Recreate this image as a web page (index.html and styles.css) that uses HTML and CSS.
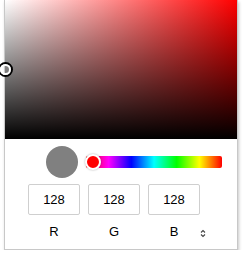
FILE: index.html
```html
<!DOCTYPE html>
<html>
<head>
<meta charset="utf-8">
<link rel="stylesheet" href="styles.css">
</head>
<body>
<div class="picker">
  <div class="sv">
    <div class="sv-marker"></div>
  </div>
  <div class="controls">
    <div class="swatch"></div>
    <div class="hue">
      <div class="hue-thumb"></div>
    </div>
  </div>
  <div class="values">
    <div class="field">128</div>
    <div class="field">128</div>
    <div class="field">128</div>
  </div>
  <div class="labels">
    <div class="label">R</div>
    <div class="label">G</div>
    <div class="label">B</div>
    <svg class="toggle" width="6" height="9" viewBox="0 0 6 9">
      <path d="M1 3.5 L3 1.5 L5 3.5 M1 5.5 L3 7.5 L5 5.5" fill="none" stroke="#444" stroke-width="1.1"/>
    </svg>
  </div>
</div>
</body>
</html>
```
FILE: styles.css
```css
html, body {
  margin: 0;
  padding: 0;
  background: #fff;
}
body {
  font-family: "Liberation Sans", Arial, sans-serif;
  font-size: 13px;
  color: #111;
}
.picker {
  margin-left: 4px;
  width: 232px;
  height: 249px;
  border: 1px solid #c8c8c8;
  border-top: 0;
  background: #fff;
  box-shadow: 1px 2px 3px rgba(0, 0, 0, 0.22);
}
.sv {
  position: relative;
  height: 139px;
  background:
    linear-gradient(to top, #000, rgba(0, 0, 0, 0)),
    linear-gradient(to right, #fff, #f00);
}
.sv-marker {
  position: absolute;
  left: 0;
  top: 69px;
  width: 7px;
  height: 7px;
  margin: -5.5px 0 0 -5.5px;
  border: 2px solid #fff;
  border-radius: 50%;
  box-shadow: 0 0 0 2px #000;
}
.controls {
  display: flex;
  align-items: center;
  margin-top: 7px;
  padding-left: 41px;
  gap: 8px;
}
.swatch {
  width: 32px;
  height: 32px;
  border-radius: 50%;
  background: #808080;
}
.hue {
  position: relative;
  width: 136px;
  height: 12px;
  border-radius: 2px;
  background: linear-gradient(to right, #f00 0%, #f0f 16.66%, #00f 33.33%, #0ff 50%, #0f0 66.66%, #ff0 83.33%, #f00 100%);
}
.hue-thumb {
  position: absolute;
  left: -1.5px;
  top: 50%;
  width: 12px;
  height: 12px;
  margin-top: -8px;
  border: 2px solid #fff;
  border-radius: 50%;
  background: #f00;
  box-shadow: 0 0 2px rgba(0, 0, 0, 0.35);
}
.values {
  display: flex;
  gap: 8px;
  margin-top: 6px;
  padding-left: 23px;
}
.field {
  box-sizing: border-box;
  width: 52px;
  height: 31px;
  border: 1px solid #cfcfcf;
  border-radius: 2px;
  display: flex;
  align-items: center;
  justify-content: center;
  color: #000;
}
.labels {
  display: flex;
  align-items: center;
  margin-top: 9px;
  padding-left: 23px;
  height: 16px;
}
.label {
  width: 52px;
  margin-right: 8px;
  text-align: center;
  line-height: 16px;
  color: #000;
}
.label:nth-child(3) {
  margin-right: 0;
}
.toggle {
  display: block;
  margin-left: 0;
  margin-top: 2px;
}
```
